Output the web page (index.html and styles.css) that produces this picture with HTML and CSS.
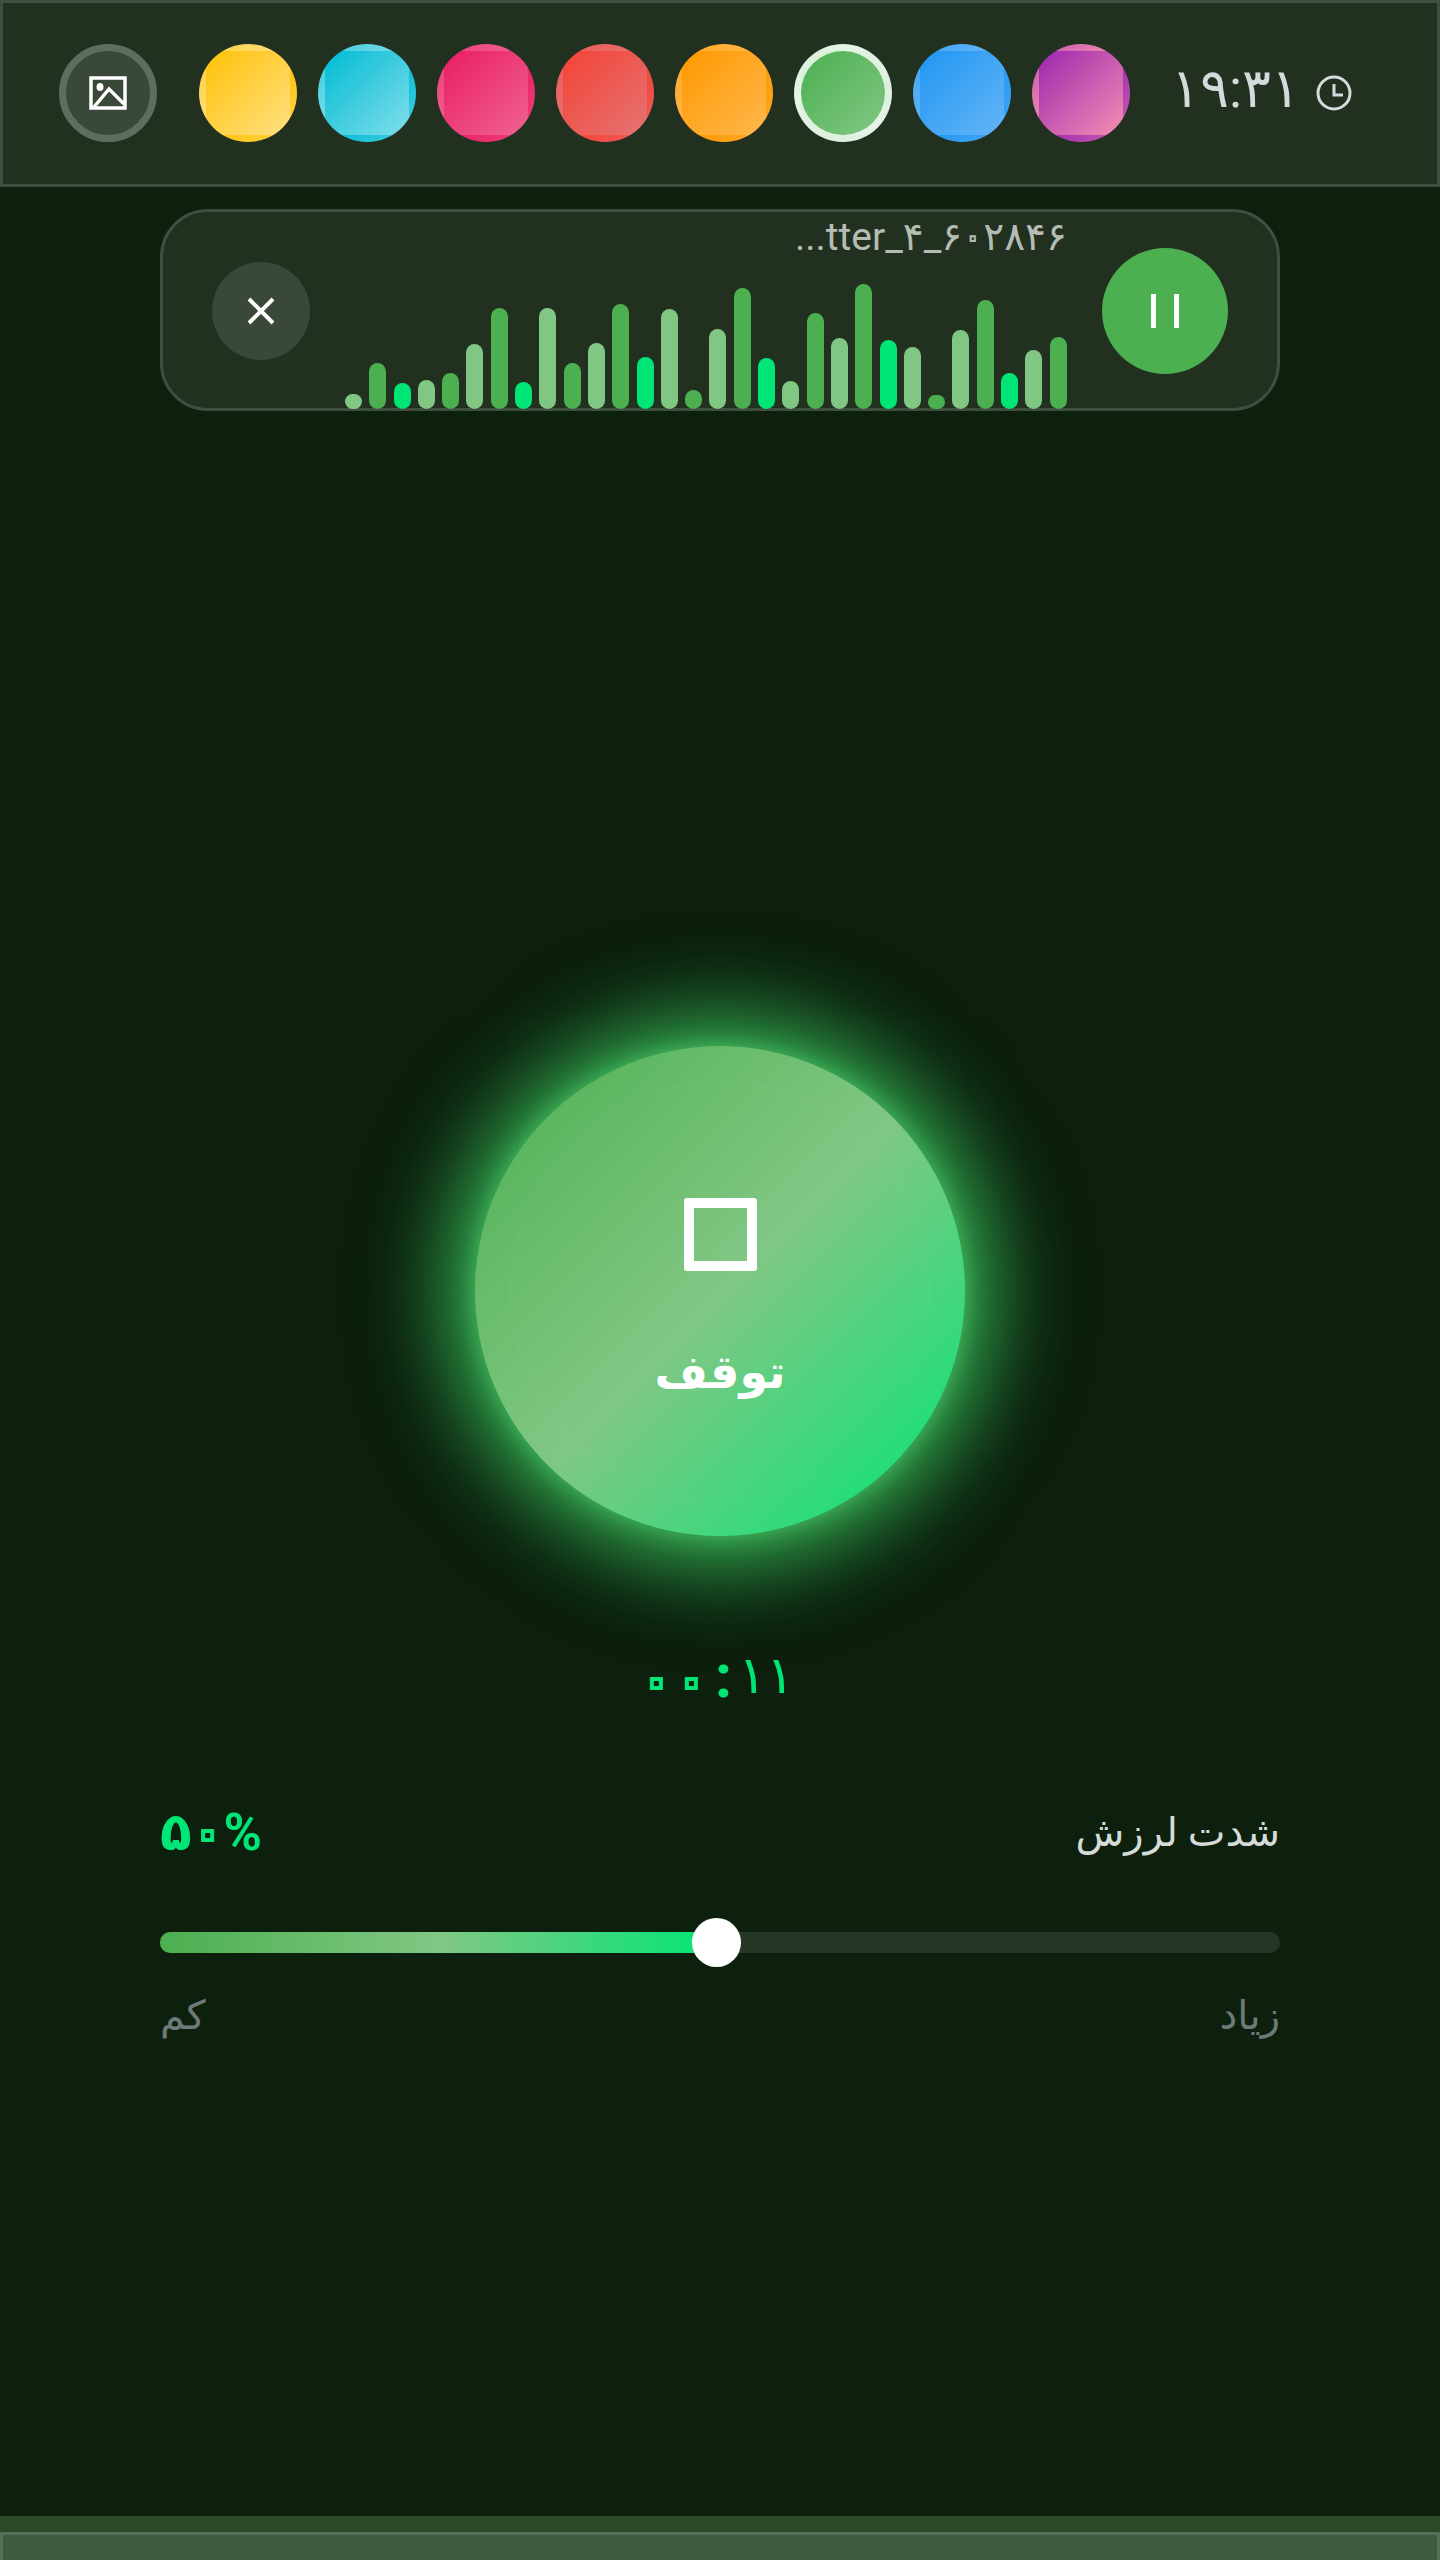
FILE: index.html
```html
<!DOCTYPE html>
<html lang="fa" dir="rtl">
<head>
    <meta charset="UTF-8">
    <title>لرزش</title>
    <link rel="stylesheet" href="styles.css">
</head>
<body>

<div class="app">
    <header class="top-bar">
        <button class="image-btn">
            <svg width="38" height="34" viewBox="0 0 38 34">
                <rect x="2" y="2" width="34" height="30" fill="none" stroke="#fff" stroke-width="3.5"/>
                <ellipse cx="11" cy="11" rx="3.5" ry="4" fill="#fff"/>
                <path d="M5 31 L20 13 L35 28" fill="none" stroke="#fff" stroke-width="3.5"/>
            </svg>
        </button>
        <div class="swatches">
            <span class="swatch amber"></span>
            <span class="swatch cyan"></span>
            <span class="swatch pink"></span>
            <span class="swatch red"></span>
            <span class="swatch orange"></span>
            <span class="swatch green selected"></span>
            <span class="swatch blue"></span>
            <span class="swatch purple"></span>
        </div>
        <div class="clock">
            <span class="clock-time">۱۹:۳۱</span>
            <svg width="36" height="36" viewBox="0 0 36 36">
                <circle cx="18" cy="18" r="16" fill="none" stroke="#d5dadc" stroke-width="3"/>
                <path d="M18 9 V20 H27" fill="none" stroke="#d5dadc" stroke-width="3"/>
            </svg>
        </div>
    </header>

    <section class="player">
        <button class="pause-btn"><i></i><i></i></button>
        <div class="track">
            <div class="file-name" dir="ltr">...tter_۴_۶<span class="name-zero">۰</span>۲۸۴۶</div>
            <div class="wave" dir="ltr">
                <span class="bar light" style="height:15px"></span>
                <span class="bar mid" style="height:46px"></span>
                <span class="bar neon" style="height:26px"></span>
                <span class="bar light" style="height:29px"></span>
                <span class="bar mid" style="height:36px"></span>
                <span class="bar light" style="height:65px"></span>
                <span class="bar mid" style="height:101px"></span>
                <span class="bar neon" style="height:27px"></span>
                <span class="bar light" style="height:101px"></span>
                <span class="bar mid" style="height:46px"></span>
                <span class="bar light" style="height:66px"></span>
                <span class="bar mid" style="height:105px"></span>
                <span class="bar neon" style="height:52px"></span>
                <span class="bar light" style="height:100px"></span>
                <span class="bar mid" style="height:19px"></span>
                <span class="bar light" style="height:80px"></span>
                <span class="bar mid" style="height:121px"></span>
                <span class="bar neon" style="height:51px"></span>
                <span class="bar light" style="height:28px"></span>
                <span class="bar mid" style="height:96px"></span>
                <span class="bar light" style="height:71px"></span>
                <span class="bar mid" style="height:125px"></span>
                <span class="bar neon" style="height:69px"></span>
                <span class="bar light" style="height:62px"></span>
                <span class="bar mid" style="height:14px"></span>
                <span class="bar light" style="height:79px"></span>
                <span class="bar mid" style="height:109px"></span>
                <span class="bar neon" style="height:36px"></span>
                <span class="bar light" style="height:59px"></span>
                <span class="bar mid" style="height:72px"></span>
            </div>
        </div>
        <button class="close-btn">
            <svg width="28" height="28" viewBox="0 0 28 28">
                <path d="M2 2 L26 26 M26 2 L2 26" stroke="#fff" stroke-width="4" fill="none"/>
            </svg>
        </button>
    </section>

    <button class="stop-btn">
        <span class="stop-icon"></span>
        <span class="stop-label">توقف</span>
    </button>

    <div class="timer" dir="ltr">
        <span class="timer-zero">۰</span>
        <span class="timer-zero">۰</span>
        <span class="timer-colon">:</span>
        <span class="timer-sec">۱۱</span>
    </div>

    <section class="intensity">
        <div class="intensity-head">
            <span class="intensity-label">شدت لرزش</span>
            <span class="intensity-value" dir="ltr">۵<span class="value-zero">۰</span>%</span>
        </div>
        <div class="slider" dir="ltr">
            <div class="slider-fill"></div>
            <div class="slider-thumb"></div>
        </div>
        <div class="slider-ends">
            <span>زیاد</span>
            <span>کم</span>
        </div>
    </section>

    <div class="bottom-bar">
        <div class="bottom-inner"></div>
    </div>
</div>

</body>
</html>
```

FILE: styles.css
```css
* {
    box-sizing: border-box;
}

body {
    margin: 0;
    background-color: #0d1f0d;
    font-family: Roboto, "DejaVu Sans", sans-serif;
}

button {
    padding: 0;
    font-family: inherit;
    cursor: pointer;
}

.app {
    display: flex;
    flex-direction: column;
    height: 2560px;
    overflow: hidden;
}

/* top bar */
.top-bar {
    direction: ltr;
    display: flex;
    align-items: center;
    height: 187px;
    padding: 0 0 1px 56px;
    background-color: #223020;
    border: 3px solid #3f4f3f;
}

.image-btn {
    display: flex;
    align-items: center;
    justify-content: center;
    width: 98px;
    height: 98px;
    border-radius: 50%;
    border: 7px solid #5f6d60;
    background-color: #3a483a;
}

.swatches {
    display: flex;
    gap: 21px;
    margin-left: 42px;
}

.swatch {
    display: block;
    width: 98px;
    height: 98px;
    border-radius: 50%;
    border: 7px solid transparent;
}

.swatch.selected {
    border-color: rgba(255, 255, 255, 0.8);
}

.amber { background-image: linear-gradient(135deg, #ffc107, #ffe082); }
.cyan { background-image: linear-gradient(135deg, #00bcd4, #80deea); }
.pink { background-image: linear-gradient(135deg, #e91e63, #f06292); }
.red { background-image: linear-gradient(135deg, #f44336, #e57373); }
.orange { background-image: linear-gradient(135deg, #ff9800, #ffb74d); }
.green { background-image: linear-gradient(135deg, #4caf50, #81c784); }
.blue { background-image: linear-gradient(135deg, #2196f3, #64b5f6); }
.purple { background-image: linear-gradient(135deg, #9c27b0, #f48fb1); }

.clock {
    display: flex;
    align-items: center;
    gap: 16px;
    margin-left: 41px;
    color: #d5dadc;
}

.clock-time {
    margin-bottom: 10px;
    font-size: 54px;
}

/* voice player */
.player {
    display: flex;
    align-items: center;
    gap: 35px;
    height: 202px;
    margin: 22px 160px 0;
    padding: 2px 49px 0;
    background-color: #223020;
    border: 3px solid #3f4f3f;
    border-radius: 48px;
}

.pause-btn {
    display: flex;
    flex-shrink: 0;
    align-items: center;
    justify-content: center;
    gap: 18px;
    width: 126px;
    height: 126px;
    border: none;
    border-radius: 50%;
    background-color: #4caf50;
}

.pause-btn i {
    display: block;
    width: 5px;
    height: 34px;
    background-color: #fff;
}

.track {
    display: flex;
    flex: 1;
    flex-direction: column;
    justify-content: space-between;
    align-self: stretch;
    margin-bottom: -1px;
    padding-top: 2px;
}

.file-name {
    font-size: 39px;
    line-height: 42px;
    color: #b4bcb4;
    text-align: right;
}

/* zeros are hollow in the app font, so they get a stroke */
.name-zero {
    color: transparent;
    -webkit-text-stroke: 2px #b4bcb4;
}

.wave {
    display: flex;
    align-items: flex-end;
    justify-content: space-between;
}

.bar {
    display: block;
    width: 17px;
    border-radius: 9px;
}

.bar.light { background-color: #81c784; }
.bar.mid { background-color: #4caf50; }
.bar.neon { background-color: #00e676; }

.close-btn {
    display: flex;
    flex-shrink: 0;
    align-items: center;
    justify-content: center;
    width: 98px;
    height: 98px;
    border: none;
    border-radius: 50%;
    background-color: #3a483a;
}

/* stop button */
.stop-btn {
    position: relative;
    display: flex;
    flex-direction: column;
    align-items: center;
    align-self: center;
    width: 490px;
    height: 490px;
    margin-top: 635px;
    padding-top: 152px;
    border: none;
    border-radius: 50%;
    background-image: linear-gradient(135deg, #4caf50 0%, #81c784 50%, #00e676 100%);
    box-shadow: 0 0 24px rgba(90, 220, 120, 0.6), 0 0 80px 28px rgba(60, 190, 90, 0.85), 0 0 150px rgba(0, 230, 118, 0.2);
}

.stop-btn::before {
    content: "";
    position: absolute;
    top: 35px;
    right: 35px;
    bottom: 35px;
    left: 35px;
    border: 2px solid rgba(255, 255, 255, 0.03);
    border-radius: 50%;
}

.stop-icon {
    display: block;
    width: 73px;
    height: 73px;
    border: 10px solid #fff;
    border-radius: 3px;
}

.stop-label {
    margin-top: 66px;
    font-size: 46px;
    font-weight: bold;
    line-height: 70px;
    color: #fff;
}

.timer {
    display: flex;
    align-items: center;
    justify-content: center;
    height: 72px;
    margin-top: 104px;
    padding-right: 7px;
    color: #00e676;
}

.timer-zero {
    width: 35px;
    margin-top: 10px;
    font-size: 52px;
    font-weight: bold;
    line-height: 72px;
    letter-spacing: -1px;
    text-align: center;
    color: transparent;
    -webkit-text-stroke: 4px #00e676;
}

.timer-colon {
    margin: 0 6px;
    font-size: 62px;
    font-weight: bold;
    line-height: 72px;
}

.timer-sec {
    font-size: 52px;
    line-height: 72px;
    letter-spacing: 8px;
}

/* intensity slider */
.intensity {
    margin: 92px 160px 0;
}

.intensity-head {
    display: flex;
    align-items: center;
    justify-content: space-between;
    height: 56px;
}

.intensity-label {
    font-size: 40px;
    color: #d5dcd8;
}

.intensity-value {
    font-size: 52px;
    font-weight: bold;
    color: #00e676;
}

.value-zero {
    color: transparent;
    -webkit-text-stroke: 4px #00e676;
}

.slider {
    position: relative;
    height: 21px;
    margin-top: 72px;
    border-radius: 10px;
    background-color: #263626;
}

.slider-fill {
    width: 50%;
    height: 100%;
    border-radius: 10px;
    background-image: linear-gradient(90deg, #4caf50 0%, #81c784 50%, #00e676 100%);
}

.slider-thumb {
    position: absolute;
    top: -14px;
    left: 532px;
    width: 49px;
    height: 49px;
    border-radius: 50%;
    background-color: #fff;
}

.slider-ends {
    display: flex;
    justify-content: space-between;
    margin-top: 38px;
    font-size: 40px;
    line-height: 50px;
    color: #6c7a78;
}

.bottom-bar {
    margin-top: auto;
    height: 44px;
    padding-top: 16px;
    background-color: #2a4a2a;
}

.bottom-inner {
    height: 28px;
    background-color: #3c5a3c;
    border: 3px solid #55705a;
    border-bottom: none;
}
```
